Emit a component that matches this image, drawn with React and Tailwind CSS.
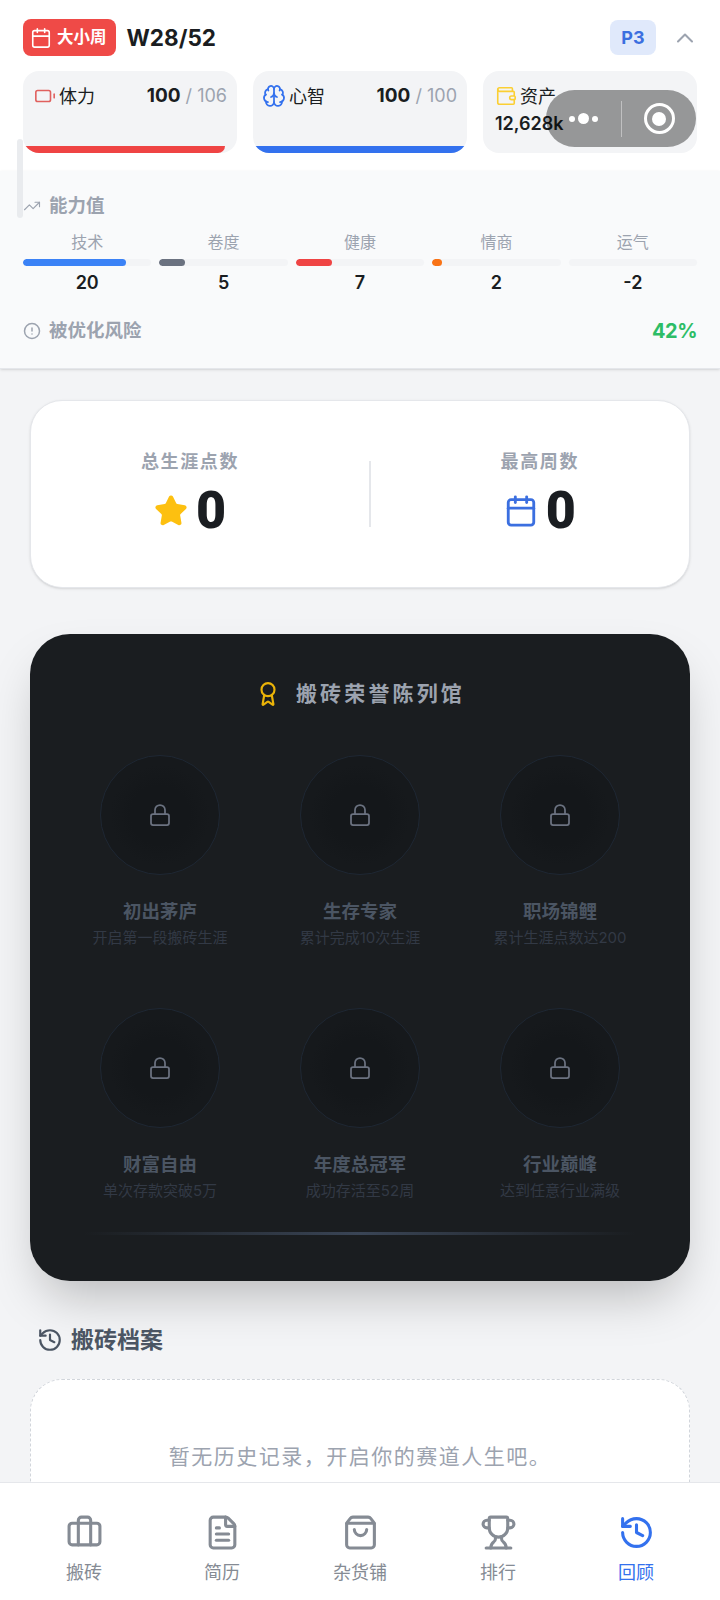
import { Award, Battery, Brain, Briefcase, Calendar, ChevronUp, CircleAlert, FileText, History, Lock, ShoppingBag, Star, TrendingUp, Trophy, Wallet } from 'lucide-react';

const abilities = [
  { label: '技术', value: '20', pct: 80, color: 'bg-[#3b82f6]' },
  { label: '卷度', value: '5', pct: 20, color: 'bg-[#6b7280]' },
  { label: '健康', value: '7', pct: 28, color: 'bg-[#ef4444]' },
  { label: '情商', value: '2', pct: 8, color: 'bg-[#f97316]' },
  { label: '运气', value: '-2', pct: 0, color: 'bg-[#22c55e]' },
];

const honors = [
  { title: '初出茅庐', desc: '开启第一段搬砖生涯' },
  { title: '生存专家', desc: '累计完成10次生涯' },
  { title: '职场锦鲤', desc: '累计生涯点数达200' },
  { title: '财富自由', desc: '单次存款突破5万' },
  { title: '年度总冠军', desc: '成功存活至52周' },
  { title: '行业巅峰', desc: '达到任意行业满级' },
];

const tabs = [
  { label: '搬砖', icon: Briefcase },
  { label: '简历', icon: FileText },
  { label: '杂货铺', icon: ShoppingBag },
  { label: '排行', icon: Trophy },
  { label: '回顾', icon: History, active: true },
];

function StatCard({ icon: Icon, iconClass, label, value, max, barClass, barWidth }) {
  return (
    <div className="relative h-[82px] rounded-2xl bg-[#f3f4f6] overflow-hidden pl-[11px] pr-[10px] pt-[13px]">
      <div className="flex items-center justify-between h-[24px]">
        <div className="flex items-center gap-[3px] text-[18px] text-[#1a1d21]">
          <Icon className={iconClass} strokeWidth={1.75} />
          <span>{label}</span>
        </div>
        <div className="text-[18px] text-[#9ca3af]">
          <span className="text-[19px] font-bold text-[#1a1d21]">{value}</span> / {max}
        </div>
      </div>
      <div className={`absolute left-0 bottom-0 h-[7px] rounded-b-xl ${barClass}`} style={{ width: barWidth }} />
    </div>
  );
}

function BigStat({ label, children }) {
  return (
    <div className="flex flex-col items-center">
      <span className="text-[18px] font-semibold tracking-[0.09em] text-[#9ca3af] leading-[28px]">{label}</span>
      <div className="flex items-center gap-[8px] mt-[5px]">
        {children}
        <span className="font-['Roboto',sans-serif] text-[52px] leading-[60px] font-black text-[#1a1d21]">0</span>
      </div>
    </div>
  );
}

export default function App() {
  return (
    <div className="relative h-[1600px] w-[720px] overflow-hidden flex flex-col bg-[#f3f4f6] font-['Inter','Noto_Sans_CJK_SC',sans-serif]">
      <div className="flex-1 min-h-0 overflow-hidden">
        <header className="bg-white px-[23px] pt-[19px] h-[171px]">
          <div className="flex items-center justify-between h-[37px]">
            <div className="flex items-center gap-[11px]">
              <div className="flex items-center gap-[5px] h-[37px] pl-[7px] pr-[9px] rounded-lg bg-[#ef4a47] text-white text-[16.5px] font-semibold">
                <Calendar className="w-[22px] h-[22px]" strokeWidth={1.75} />
                <span>大小周</span>
              </div>
              <span className="text-[22.5px] font-bold text-[#1a1d21]">W28/52</span>
            </div>
            <div className="flex items-center gap-[15px] -mr-[2px]">
              <div className="w-[46px] h-[35px] rounded-lg bg-[#e0e9fb] text-[#3b6fe0] font-bold text-[18px] flex items-center justify-center">P3</div>
              <ChevronUp className="w-[28px] h-[28px] text-[#9ca3af]" strokeWidth={1.75} />
            </div>
          </div>
          <div className="grid grid-cols-3 gap-4 mt-[15px]">
            <StatCard icon={Battery} iconClass="w-[22px] h-[22px] text-[#e0605e]" label="体力" value="100" max="106" barClass="bg-[#ef4444]" barWidth="94.3%" />
            <StatCard icon={Brain} iconClass="w-[24px] h-[24px] -ml-[2px] text-[#3371ee]" label="心智" value="100" max="100" barClass="bg-[#3371ee]" barWidth="100%" />
            <div className="h-[82px] rounded-2xl bg-[#f3f4f6] pl-[12px] pr-3 pt-[13px]">
              <div className="flex items-center gap-[3px] h-[24px] text-[18px] text-[#1a1d21]">
                <Wallet className="w-[22px] h-[22px] text-[#fbcf33]" strokeWidth={1.75} />
                <span>资产</span>
              </div>
              <div className="text-[18px] font-semibold text-[#1a1d21] mt-[4px] leading-[24px]">12,628k</div>
            </div>
          </div>
        </header>

        <section className="h-[198px] bg-[#f9fafb] border-b border-[#e5e7eb] shadow-sm px-[23px] pt-[22px]">
          <div className="flex items-center gap-2 h-[26px] text-[18.5px] font-semibold text-[#9ca3af]">
            <TrendingUp className="w-[18px] h-[18px]" strokeWidth={1.5} />
            <span>能力值</span>
          </div>
          <div className="grid grid-cols-5 gap-2 mt-[11px]">
            {abilities.map(a => (
              <div key={a.label} className="flex flex-col items-center">
                <span className="text-[16px] leading-[24px] text-[#9ca3af]">{a.label}</span>
                <div className="w-full h-[7px] rounded-full bg-[#f3f4f6] mt-[5px] overflow-hidden">
                  <div className={`h-full rounded-full ${a.color}`} style={{ width: `${a.pct}%` }} />
                </div>
                <span className="text-[18px] leading-[24px] font-semibold text-[#1a1d21] mt-[5px]">{a.value}</span>
              </div>
            ))}
          </div>
          <div className="flex items-center justify-between mt-[22px] h-[28px]">
            <div className="flex items-center gap-2 text-[18.5px] font-semibold text-[#9ca3af]">
              <CircleAlert className="w-[18px] h-[18px]" strokeWidth={2} />
              <span>被优化风险</span>
            </div>
            <span className="text-[20px] font-bold tracking-tight text-[#2dbd66]">42%</span>
          </div>
        </section>

        <main className="px-[30px] pt-[31px]">
          <div className="h-[188px] rounded-[32px] bg-white border border-[#e5e7eb] shadow-sm flex items-center justify-between px-[110px]">
            <BigStat label="总生涯点数">
              <Star className="w-[34px] h-[34px] text-[#fdc010] fill-[#fdc010]" strokeWidth={2} />
            </BigStat>
            <div className="w-[2px] h-[66px] bg-[#e5e7eb]" />
            <BigStat label="最高周数">
              <Calendar className="w-[34px] h-[34px] text-[#3b6fe0]" strokeWidth={2} />
            </BigStat>
          </div>

          <div className="mt-[46px] h-[647px] rounded-[40px] bg-[#1a1d20] shadow-2xl px-[42px] pt-[44px]">
            <div className="flex items-center justify-center gap-[15px] h-[32px]">
              <Award className="w-[26px] h-[26px] text-[#eab308]" strokeWidth={2} />
              <span className="text-[21px] font-bold tracking-[0.15em] text-[#9ca3af]">搬砖荣誉陈列馆</span>
            </div>
            <div className="grid grid-cols-3 gap-x-6 gap-y-[33px] mt-[45px]">
              {honors.map(h => (
                <div key={h.title} className="flex flex-col items-center h-[220px]">
                  <div className="w-[120px] h-[120px] rounded-full bg-[radial-gradient(circle,#14171a_0%,#14171a_35%,#16191c_60%)] border border-[#1e2733] flex items-center justify-center">
                    <Lock className="w-[24px] h-[24px] text-[#6b7280]" strokeWidth={1.75} />
                  </div>
                  <span className="mt-[21.5px] text-[18.5px] leading-[28px] font-semibold text-[#4b5563]">{h.title}</span>
                  <span className="text-[15px] leading-[20px] mt-[3px] text-[#323945]">{h.desc}</span>
                </div>
              ))}
            </div>
            <div className="h-[3px] mx-[12px] mt-[4px] bg-gradient-to-r from-transparent via-[#3a4556] to-transparent" />
          </div>

          <div className="flex items-center gap-[8px] mt-[43px] h-[32px] pl-[7px]">
            <History className="w-[26px] h-[26px] text-[#4b5563]" strokeWidth={2} />
            <span className="text-[23px] font-bold text-[#4b5563]">搬砖档案</span>
          </div>
          <div className="mt-[23px] h-[200px] rounded-[32px] bg-white border border-dashed border-[#d1d5db] flex justify-center pt-[60px]">
            <span className="font-['Noto_Sans_CJK_SC',sans-serif] text-[21px] tracking-[1.5px] leading-[30px] text-[#9ca3af]">{'暂无历史记录\uFF0C开启你的赛道人生吧\u3002'}</span>
          </div>
        </main>
      </div>

      <nav className="h-[118px] shrink-0 bg-white border-t border-[#e5e7eb] grid grid-cols-5 px-[15px] pt-[31px]">
        {tabs.map(t => (
          <div key={t.label} className={`flex flex-col items-center ${t.active ? 'text-[#3371ee]' : 'text-[#858b94]'}`}>
            <t.icon className="w-[37px] h-[37px]" strokeWidth={2} />
            <span className="text-[18px] leading-[28px] mt-[8px]">{t.label}</span>
          </div>
        ))}
      </nav>

      {/* capsule and stray scrollbar lie over the page */}
      <div className="absolute left-[546px] top-[90px] w-[150px] h-[57px] rounded-full bg-black/[0.38] flex items-center">
        <div className="w-[75px] flex items-center justify-center gap-[3px]">
          <span className="w-[6px] h-[6px] rounded-full bg-white" />
          <span className="w-[11px] h-[11px] rounded-full bg-white" />
          <span className="w-[6px] h-[6px] rounded-full bg-white" />
        </div>
        <div className="w-px h-[36px] bg-white/40" />
        <div className="flex-1 flex items-center justify-center">
          <div className="w-[31px] h-[31px] rounded-full border-[3px] border-white flex items-center justify-center">
            <div className="w-[14px] h-[14px] rounded-full bg-white" />
          </div>
        </div>
      </div>
      <div className="absolute left-[17px] top-[139px] w-[6px] h-[79px] rounded-full bg-[#e5e7eb]/80" />
    </div>
  );
}
